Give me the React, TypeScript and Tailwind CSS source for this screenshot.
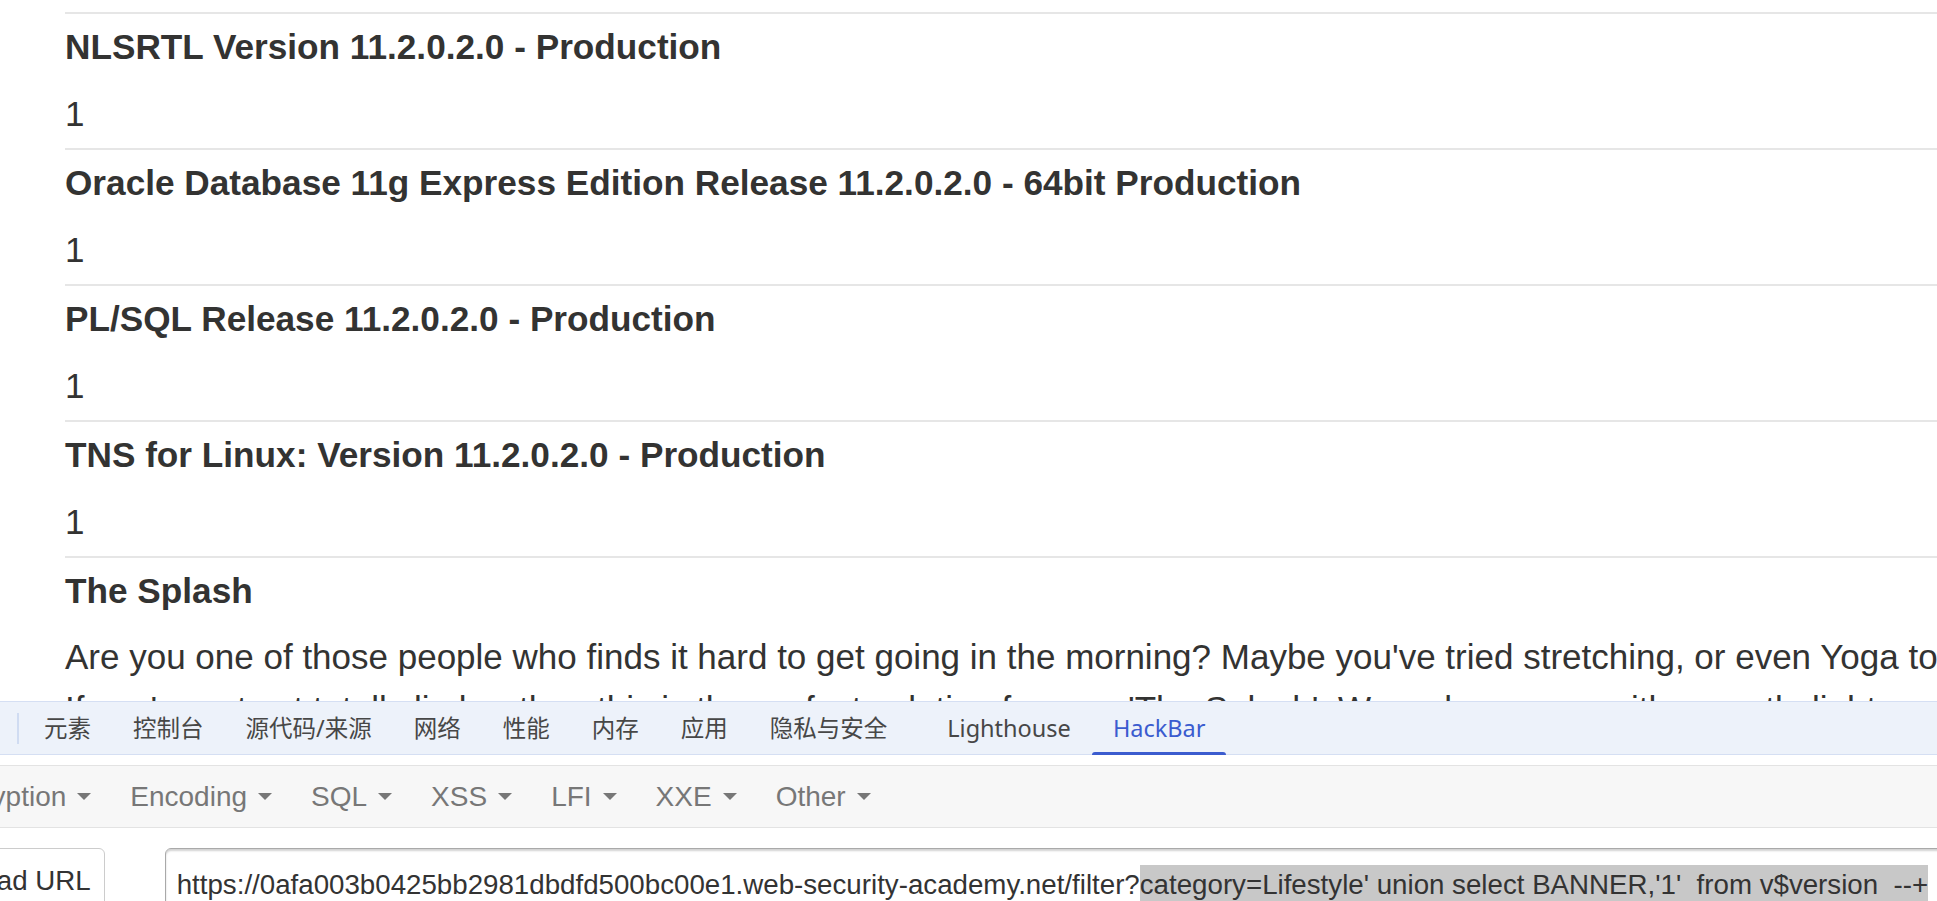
const rows = [
  "NLSRTL Version 11.2.0.2.0 - Production",
  "Oracle Database 11g Express Edition Release 11.2.0.2.0 - 64bit Production",
  "PL/SQL Release 11.2.0.2.0 - Production",
  "TNS for Linux: Version 11.2.0.2.0 - Production",
];

const tabs = ["元素", "控制台", "源代码/来源", "网络", "性能", "内存", "应用", "隐私与安全"];

const menus = ["Encryption", "Encoding", "SQL", "XSS", "LFI", "XXE", "Other"];

function Caret() {
  return <span className="inline-block h-0 w-0 border-x-[7px] border-t-[7px] border-x-transparent border-t-[#777777]" />;
}

export default function App() {
  return (
    <div className="flex h-[901px] w-[1937px] flex-col overflow-hidden bg-white">
      {/* page */}
      <div className="h-[701px] shrink-0 overflow-hidden pl-[65px] pt-[12px] font-['Liberation_Sans',Arial,sans-serif] text-[#333332]">
        {rows.map((r) => (
          <div key={r} className="border-t-2 border-[#e6e6e6] pb-[14px] pt-[13px]">
            <h3 className="whitespace-nowrap text-[35.2px] font-bold leading-[40px]">{r}</h3>
            <p className="mt-[27px] text-[35px] leading-[40px]">1</p>
          </div>
        ))}
        <div className="border-t-2 border-[#e6e6e6] pt-[13px]">
          <h3 className="text-[35.2px] font-bold leading-[40px]">The Splash</h3>
          <p className="mt-[20px] whitespace-nowrap text-[35px] leading-[52px]">
            Are you one of those people who finds it hard to get going in the morning? Maybe you've tried stretching, or even Yoga to loosen up.
            <br />
            If you're not yet totally limber then this is the perfect solution for you. 'The Splash'. We wake you up with a gentle light spray.
          </p>
        </div>
      </div>

      {/* devtools */}
      <div className="flex flex-1 flex-col overflow-hidden bg-white">
        <div className="flex h-[54px] shrink-0 items-center border-y border-[#d5dff3] bg-[#edf2fa] font-['Noto_Sans','Noto_Sans_CJK_SC',sans-serif] text-[23.5px] text-[#474747]">
          <div className="ml-[17px] h-[31px] w-[2px] bg-[#d0dcf2]" />
          <div className="ml-[4px] flex h-full">
            {tabs.map((t) => (
              <div key={t} className="flex h-full items-center px-[21px] pt-[2px]">
                {t}
              </div>
            ))}
            <div className="ml-[18px] flex h-full items-center px-[21px] pt-[2px]">Lighthouse</div>
            <div className="relative flex h-full items-center px-[21px] pt-[2px] text-[#3b5ccf]">
              HackBar
              <span className="absolute bottom-[-1px] left-0 right-0 h-[3px] rounded-t-[3px] bg-[#3b5ccf]" />
            </div>
          </div>
        </div>

        <div className="h-[10px] shrink-0" />

        <div className="flex h-[63px] shrink-0 items-center overflow-hidden border-y border-[#e3e3e3] bg-[#f7f7f7] font-['Liberation_Sans',Arial,sans-serif] text-[28px] text-[#777777]">
          <div className="ml-[-66px] flex items-center gap-[39px]">
            {menus.map((m) => (
              <div key={m} className="flex items-center gap-[11px] whitespace-nowrap">
                <span>{m}</span>
                <Caret />
              </div>
            ))}
          </div>
        </div>

        <div className="flex shrink-0 items-start pt-[20px] font-['Liberation_Sans',Arial,sans-serif] text-[27.7px] text-[#333333]">
          <div className="ml-[-48px] h-[80px] shrink-0 whitespace-nowrap rounded-[6px] border border-[#cccccc] bg-white pl-[13px] pr-[13px] pt-[11px]">
            Load URL
          </div>
          <div className="ml-[60px] h-[80px] w-[1900px] shrink-0 whitespace-pre rounded-[6px] border border-[#a9a9a9] bg-white pl-[11px] pt-[15px] shadow-[inset_0_2px_2px_rgba(0,0,0,0.18)]">
            https://0afa003b0425bb2981dbdfd500bc00e1.web-security-academy.net/filter?
            <span className="bg-[#c8c8c8] py-[4px]">category=Lifestyle' union select BANNER,'1'  from v$version  --+</span>
          </div>
        </div>
      </div>
    </div>
  );
}
